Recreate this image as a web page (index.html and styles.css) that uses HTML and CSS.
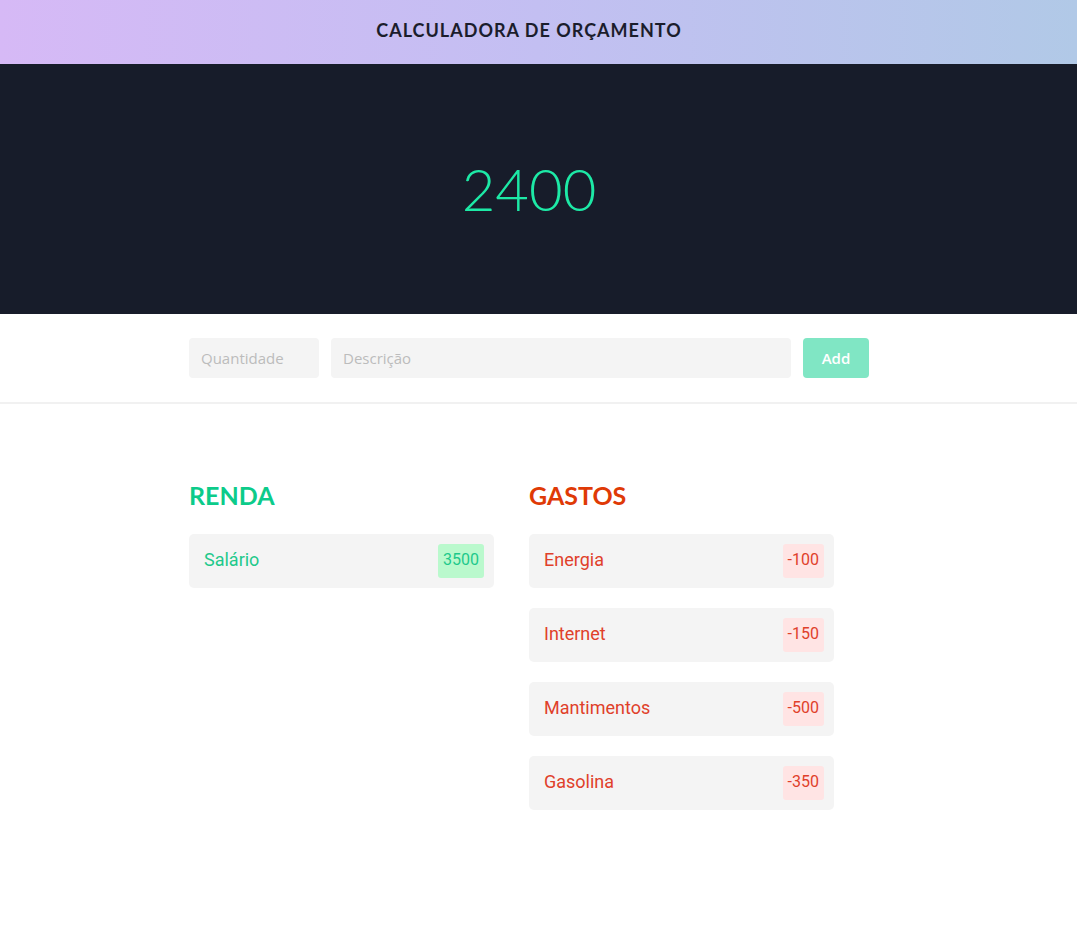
FILE: index.html
```html
<!DOCTYPE html>
<html lang="pt">
<head>
<meta charset="utf-8">
<title>Calculadora de Orçamento</title>
<link rel="stylesheet" href="styles.css">
</head>
<body>
<header class="topbar">
  <h1 class="title">CALCULADORA DE ORÇAMENTO</h1>
</header>
<section class="hero">
  <div class="total">2400</div>
</section>
<section class="form-bar">
  <form class="form container">
    <input class="field field-qty" type="text" placeholder="Quantidade">
    <input class="field field-desc" type="text" placeholder="Descrição">
    <button class="add" type="button">Add</button>
  </form>
</section>
<main class="lists">
  <div class="container columns">
    <div class="column income">
      <h2 class="col-title">RENDA</h2>
      <ul class="items">
        <li class="item"><span class="item-name">Salário</span><span class="badge">3500</span></li>
      </ul>
    </div>
    <div class="column expense">
      <h2 class="col-title">GASTOS</h2>
      <ul class="items">
        <li class="item"><span class="item-name">Energia</span><span class="badge">-100</span></li>
        <li class="item"><span class="item-name">Internet</span><span class="badge">-150</span></li>
        <li class="item"><span class="item-name">Mantimentos</span><span class="badge">-500</span></li>
        <li class="item"><span class="item-name">Gasolina</span><span class="badge">-350</span></li>
      </ul>
    </div>
  </div>
</main>
</body>
</html>
```

FILE: styles.css
```css
* { box-sizing: border-box; }
html, body { margin: 0; padding: 0; }
body {
  font-family: "Lato", "Open Sans", sans-serif;
  background: #ffffff;
  color: #171c2a;
}
.topbar {
  height: 64px;
  display: flex;
  align-items: center;
  justify-content: center;
  padding: 0 19px 4px 0;
  background: linear-gradient(90deg, #d6b9f6 0%, #c3bff2 50%, #b1c9e7 100%);
}
.title {
  margin: 0;
  font-family: "Lato", sans-serif;
  font-weight: 700;
  font-size: 18px;
  letter-spacing: 1px;
  color: #1b1d2c;
}
.hero {
  height: 250px;
  background: #171c2a;
  display: flex;
  align-items: center;
  justify-content: center;
  padding-right: 19px;
}
.total {
  font-family: "Lato", sans-serif;
  font-weight: 300;
  font-size: 58px;
  color: #1de9a6;
  line-height: 1;
  margin-top: 0;
}
.form-bar {
  padding: 24px 19px 24px 0;
  border-bottom: 2px solid #f1f1f1;
}
.container {
  width: 680px;
  margin: 0 auto;
}
.form {
  display: flex;
  gap: 12px;
}
.field {
  height: 40px;
  border: none;
  border-radius: 4px;
  background: #f4f4f4;
  padding: 0 12px;
  font-family: "Open Sans", sans-serif;
  font-size: 15px;
  color: #444;
  outline: none;
}
.field::placeholder { color: #bcbcbc; }
.field-qty { width: 130px; }
.field-desc { width: 460px; }
.add {
  width: 66px;
  height: 40px;
  border: none;
  border-radius: 4px;
  background: #80e6c4;
  color: #ffffff;
  font-family: "Open Sans", sans-serif;
  font-weight: 600;
  font-size: 15px;
  padding: 0;
}
.lists {
  padding: 77px 19px 60px 0;
}
.columns {
  display: flex;
  gap: 35px;
}
.column { width: 305px; }
.col-title {
  margin: 0 0 24px;
  font-family: "Lato", sans-serif;
  font-weight: 700;
  font-size: 25px;
  line-height: 29px;
}
.income .col-title { color: #0ccb8a; }
.expense .col-title { color: #df3a06; }
.items {
  list-style: none;
  margin: 0;
  padding: 0;
  display: flex;
  flex-direction: column;
  gap: 20px;
}
.item {
  height: 54px;
  background: #f4f4f4;
  border-radius: 5px;
  display: flex;
  align-items: center;
  justify-content: space-between;
  padding: 0 10px 0 15px;
  font-family: "Roboto", sans-serif;
}
.item-name { font-size: 18px; line-height: 1; margin-top: -2px; }
.badge {
  height: 34px;
  line-height: 32px;
  padding: 0 5px;
  border-radius: 3px;
  font-size: 16px;
}
.income .item-name { color: #1ec98b; }
.income .badge { background: #baf9cd; color: #1ec98b; }
.expense .item-name { color: #e0402a; }
.expense .badge { background: #ffe4e4; color: #e0402a; }
```
